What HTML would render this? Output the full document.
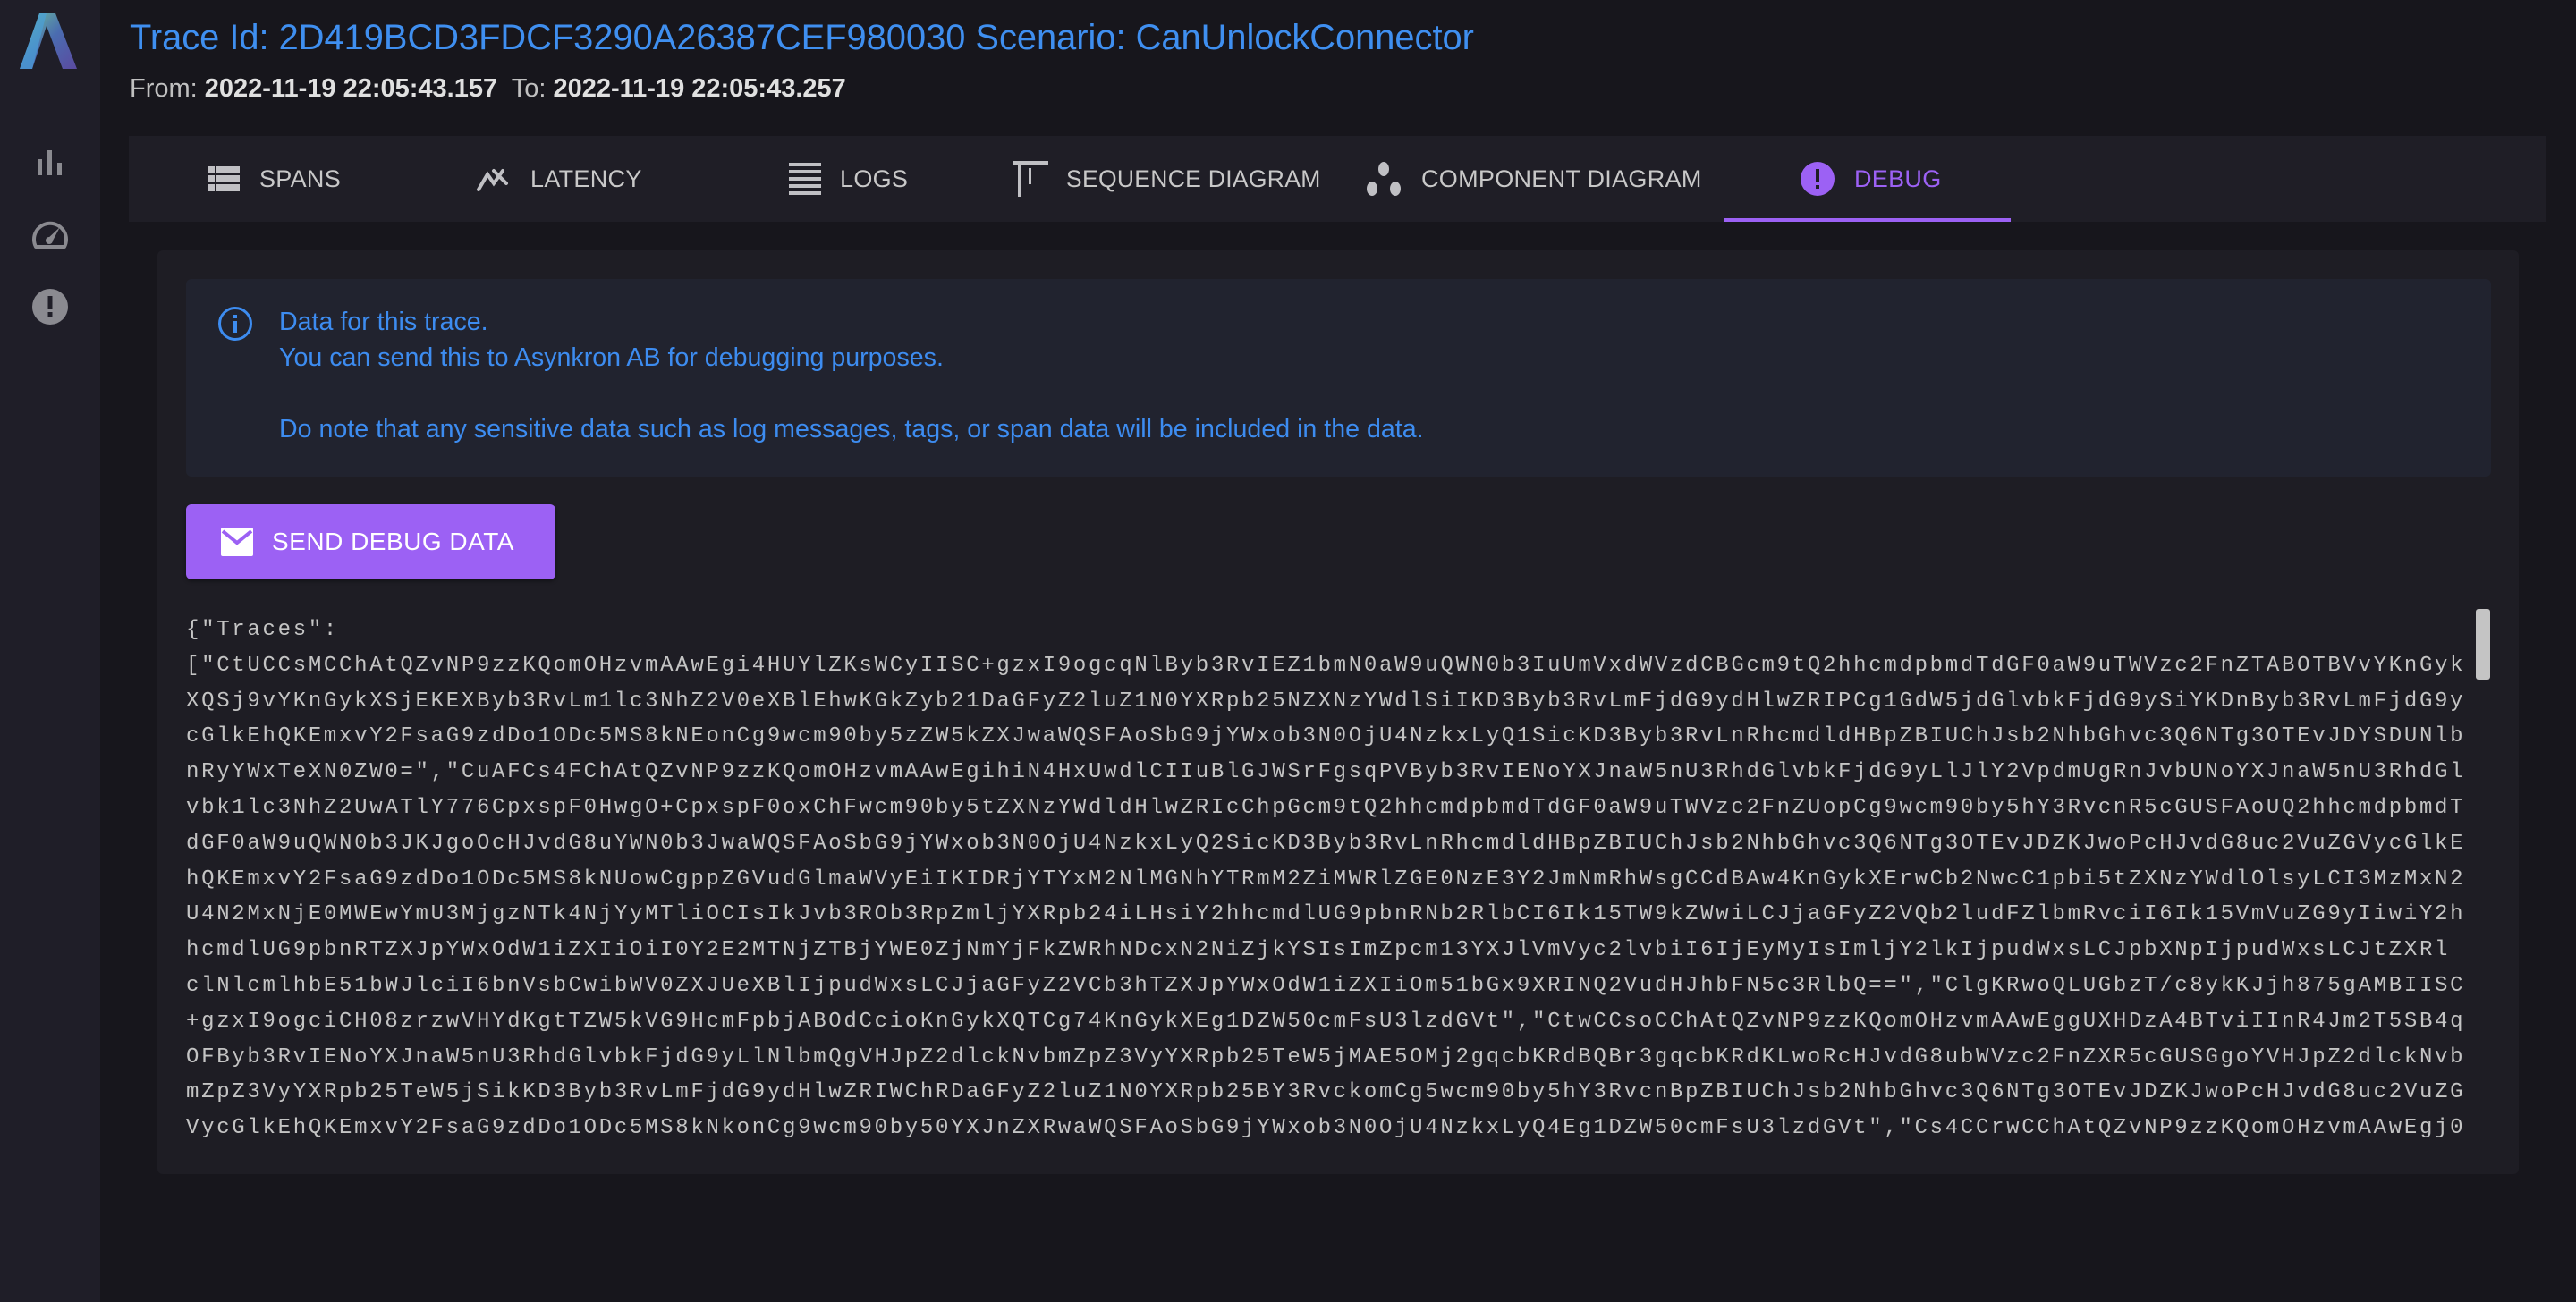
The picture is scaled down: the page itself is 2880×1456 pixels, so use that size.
<!DOCTYPE html>
<html><head><meta charset="utf-8"><style>
*{margin:0;padding:0;box-sizing:border-box}
body{width:2880px;height:1456px;background:#17161c;font-family:"Liberation Sans",sans-serif;position:relative;overflow:hidden}
.side{position:absolute;left:0;top:0;width:112px;height:1456px;background:#1f1e28}
.abs{position:absolute}
.title{left:145px;top:20px;font-size:40px;color:#3f8ff0;white-space:nowrap;transform-origin:left top;transform:scaleX(0.995)}
.date{left:145px;top:83px;font-size:29px;color:#c0c0c0;white-space:nowrap;transform-origin:left top;transform:scaleX(1.0)}
.date b{color:#e0e0e0}
.tabs{left:144px;top:152px;width:2703px;height:96px;background:#1f1e26}
.tab{position:absolute;top:186px;font-size:27px;color:#c8c8c8;white-space:nowrap;line-height:28px;letter-spacing:0.3px}
.panel{left:176px;top:280px;width:2640px;height:1033px;background:#1e1d24;border-radius:6px}
.info{left:208px;top:312px;width:2577px;height:221px;background:#21232f;border-radius:6px}
.itxt{position:absolute;left:312px;font-size:28.6px;color:#3d8cf0;white-space:nowrap}
.btn{left:208px;top:564px;width:413px;height:84px;background:#9c61f4;border-radius:6px;box-shadow:0 2px 4px rgba(0,0,0,.4)}
.btn span{position:absolute;left:96px;top:26px;color:#fff;font-size:28px;letter-spacing:0.5px}
.mono{left:208px;top:685px;width:2552px;height:600px;overflow:hidden;font-family:"Liberation Mono",monospace;font-size:24px;letter-spacing:2.7px;line-height:39.8px;color:#c4c4c4;white-space:pre}
</style></head><body>
<div class="side"></div>
<svg class="abs" style="left:22px;top:15px" width="64" height="62" viewBox="0 0 64 62">
<defs><linearGradient id="g" x1="0" y1="0" x2="1" y2="1"><stop offset="0" stop-color="#6fc89a"/><stop offset="0.5" stop-color="#4a6cb0"/><stop offset="1" stop-color="#5b4aa0"/></linearGradient></defs>
<polygon points="22,0 40,0 64,62 48,62 30,14 14,62 0,62" fill="url(#g)"/>
<polygon points="22,0 30,0 14,62 0,62" fill="#4aa0d8" opacity=".7"/>
</svg>
<svg class="abs" style="left:40px;top:166px" width="32" height="32"><rect x="2" y="12" width="5" height="18" fill="#8a8a90"/><rect x="13" y="2" width="5" height="28" fill="#8a8a90"/><rect x="24" y="16" width="5" height="14" fill="#8a8a90"/></svg>
<svg class="abs" style="left:34px;top:244px" width="44" height="36" viewBox="0 0 44 36"><path d="M6 32 A18 18 0 1 1 38 32 Z" fill="none" stroke="#8a8a90" stroke-width="4" stroke-linejoin="round"/><path d="M18 24 L33 10 L24 27 Z" fill="#8a8a90"/><circle cx="21" cy="25" r="4" fill="#8a8a90"/></svg>
<svg class="abs" style="left:35px;top:322px" width="42" height="42"><circle cx="21" cy="21" r="20" fill="#8a8a90"/><rect x="18.5" y="9" width="5" height="15" fill="#1f1e28"/><rect x="18.5" y="27" width="5" height="5" fill="#1f1e28"/></svg>

<div class="abs title">Trace Id: 2D419BCD3FDCF3290A26387CEF980030 Scenario: CanUnlockConnector</div>
<div class="abs date">From: <b>2022-11-19 22:05:43.157</b>&nbsp; To: <b>2022-11-19 22:05:43.257</b></div>

<div class="abs tabs"></div>
<svg class="abs" style="left:232px;top:186px" width="36" height="28"><g fill="#c0c0c4"><rect x="0" y="0" width="8" height="8"/><rect x="10" y="0" width="26" height="8"/><rect x="0" y="10" width="8" height="8"/><rect x="10" y="10" width="26" height="8"/><rect x="0" y="20" width="8" height="8"/><rect x="10" y="20" width="26" height="8"/></g></svg>
<div class="tab" style="left:290px">SPANS</div>
<svg class="abs" style="left:532px;top:186px" width="40" height="28"><path d="M3 26 L13 9 L20 19 L30 5 M20 5 L34 19" fill="none" stroke="#c0c0c4" stroke-width="4" stroke-linecap="round"/></svg>
<div class="tab" style="left:593px">LATENCY</div>
<svg class="abs" style="left:882px;top:182px" width="36" height="36"><g fill="#c0c0c4"><rect y="0" width="36" height="4"/><rect y="8" width="36" height="4"/><rect y="16" width="36" height="4"/><rect y="24" width="36" height="4"/><rect y="32" width="36" height="4"/></g></svg>
<div class="tab" style="left:939px">LOGS</div>
<svg class="abs" style="left:1132px;top:180px" width="40" height="40"><g fill="#c0c0c4"><rect x="0" y="0" width="40" height="5"/><rect x="6" y="5" width="4" height="35"/><rect x="18" y="8" width="3" height="18"/></g></svg>
<div class="tab" style="left:1192px;font-size:26.5px">SEQUENCE DIAGRAM</div>
<svg class="abs" style="left:1526px;top:180px" width="44" height="40"><g fill="#c0c0c4"><ellipse cx="21" cy="9" rx="6" ry="8"/><ellipse cx="8" cy="31" rx="6" ry="8"/><ellipse cx="34" cy="31" rx="6" ry="8"/></g></svg>
<div class="tab" style="left:1589px">COMPONENT DIAGRAM</div>
<svg class="abs" style="left:2012px;top:180px" width="40" height="40"><circle cx="20" cy="20" r="19" fill="#9c61f4"/><rect x="18" y="9" width="4" height="14" fill="#1f1e26"/><rect x="18" y="27" width="4" height="4" fill="#1f1e26"/></svg>
<div class="tab" style="left:2073px;color:#9c61f4">DEBUG</div>
<div class="abs" style="left:1928px;top:244px;width:320px;height:4px;background:#9c61f4"></div>

<div class="abs panel"></div>
<div class="abs info"></div>
<svg class="abs" style="left:243px;top:342px" width="40" height="40"><circle cx="20" cy="20" r="17.5" fill="none" stroke="#3d8cf0" stroke-width="3"/><rect x="18" y="17" width="4" height="13" fill="#3d8cf0"/><rect x="18" y="10" width="4" height="4" fill="#3d8cf0"/></svg>
<div class="itxt" style="top:344px">Data for this trace.</div>
<div class="itxt" style="top:384px">You can send this to Asynkron AB for debugging purposes.</div>
<div class="itxt" style="top:464px">Do note that any sensitive data such as log messages, tags, or span data will be included in the data.</div>

<div class="abs btn"><svg class="abs" style="left:38px;top:25px" width="38" height="34"><rect x="1" y="1" width="36" height="32" rx="2" fill="#fff"/><path d="M3 5 L19 18 L35 5" fill="none" stroke="#9c61f4" stroke-width="4"/></svg><span>SEND DEBUG DATA</span></div>

<div class="abs mono">{"Traces":
["CtUCCsMCChAtQZvNP9zzKQomOHzvmAAwEgi4HUYlZKsWCyIISC+gzxI9ogcqNlByb3RvIEZ1bmN0aW9uQWN0b3IuUmVxdWVzdCBGcm9tQ2hhcmdpbmdTdGF0aW9uTWVzc2FnZTABOTBVvYKnGyk
XQSj9vYKnGykXSjEKEXByb3RvLm1lc3NhZ2V0eXBlEhwKGkZyb21DaGFyZ2luZ1N0YXRpb25NZXNzYWdlSiIKD3Byb3RvLmFjdG9ydHlwZRIPCg1GdW5jdGlvbkFjdG9ySiYKDnByb3RvLmFjdG9y
cGlkEhQKEmxvY2FsaG9zdDo1ODc5MS8kNEonCg9wcm90by5zZW5kZXJwaWQSFAoSbG9jYWxob3N0OjU4NzkxLyQ1SicKD3Byb3RvLnRhcmdldHBpZBIUChJsb2NhbGhvc3Q6NTg3OTEvJDYSDUNlb
nRyYWxTeXN0ZW0=","CuAFCs4FChAtQZvNP9zzKQomOHzvmAAwEgihiN4HxUwdlCIIuBlGJWSrFgsqPVByb3RvIENoYXJnaW5nU3RhdGlvbkFjdG9yLlJlY2VpdmUgRnJvbUNoYXJnaW5nU3RhdGl
vbk1lc3NhZ2UwATlY776CpxspF0HwgO+CpxspF0oxChFwcm90by5tZXNzYWdldHlwZRIcChpGcm9tQ2hhcmdpbmdTdGF0aW9uTWVzc2FnZUopCg9wcm90by5hY3RvcnR5cGUSFAoUQ2hhcmdpbmdT
dGF0aW9uQWN0b3JKJgoOcHJvdG8uYWN0b3JwaWQSFAoSbG9jYWxob3N0OjU4NzkxLyQ2SicKD3Byb3RvLnRhcmdldHBpZBIUChJsb2NhbGhvc3Q6NTg3OTEvJDZKJwoPcHJvdG8uc2VuZGVycGlkE
hQKEmxvY2FsaG9zdDo1ODc5MS8kNUowCgppZGVudGlmaWVyEiIKIDRjYTYxM2NlMGNhYTRmM2ZiMWRlZGE0NzE3Y2JmNmRhWsgCCdBAw4KnGykXErwCb2NwcC1pbi5tZXNzYWdlOlsyLCI3MzMxN2
U4N2MxNjE0MWEwYmU3MjgzNTk4NjYyMTliOCIsIkJvb3ROb3RpZmljYXRpb24iLHsiY2hhcmdlUG9pbnRNb2RlbCI6Ik15TW9kZWwiLCJjaGFyZ2VQb2ludFZlbmRvciI6Ik15VmVuZG9yIiwiY2h
hcmdlUG9pbnRTZXJpYWxOdW1iZXIiOiI0Y2E2MTNjZTBjYWE0ZjNmYjFkZWRhNDcxN2NiZjkYSIsImZpcm13YXJlVmVyc2lvbiI6IjEyMyIsImljY2lkIjpudWxsLCJpbXNpIjpudWxsLCJtZXRl
clNlcmlhbE51bWJlciI6bnVsbCwibWV0ZXJUeXBlIjpudWxsLCJjaGFyZ2VCb3hTZXJpYWxOdW1iZXIiOm51bGx9XRINQ2VudHJhbFN5c3RlbQ==","ClgKRwoQLUGbzT/c8ykKJjh875gAMBIISC
+gzxI9ogciCH08zrzwVHYdKgtTZW5kVG9HcmFpbjABOdCcioKnGykXQTCg74KnGykXEg1DZW50cmFsU3lzdGVt","CtwCCsoCChAtQZvNP9zzKQomOHzvmAAwEggUXHDzA4BTviIInR4Jm2T5SB4q
OFByb3RvIENoYXJnaW5nU3RhdGlvbkFjdG9yLlNlbmQgVHJpZ2dlckNvbmZpZ3VyYXRpb25TeW5jMAE5OMj2gqcbKRdBQBr3gqcbKRdKLwoRcHJvdG8ubWVzc2FnZXR5cGUSGgoYVHJpZ2dlckNvb
mZpZ3VyYXRpb25TeW5jSikKD3Byb3RvLmFjdG9ydHlwZRIWChRDaGFyZ2luZ1N0YXRpb25BY3RvckomCg5wcm90by5hY3RvcnBpZBIUChJsb2NhbGhvc3Q6NTg3OTEvJDZKJwoPcHJvdG8uc2VuZG
VycGlkEhQKEmxvY2FsaG9zdDo1ODc5MS8kNkonCg9wcm90by50YXJnZXRwaWQSFAoSbG9jYWxob3N0OjU4NzkxLyQ4Eg1DZW50cmFsU3lzdGVt","Cs4CCrwCChAtQZvNP9zzKQomOHzvmAAwEgj0</div>
<div class="abs" style="left:2768px;top:681px;width:16px;height:79px;background:#c4c4c4;border-radius:3px"></div>
</body></html>
